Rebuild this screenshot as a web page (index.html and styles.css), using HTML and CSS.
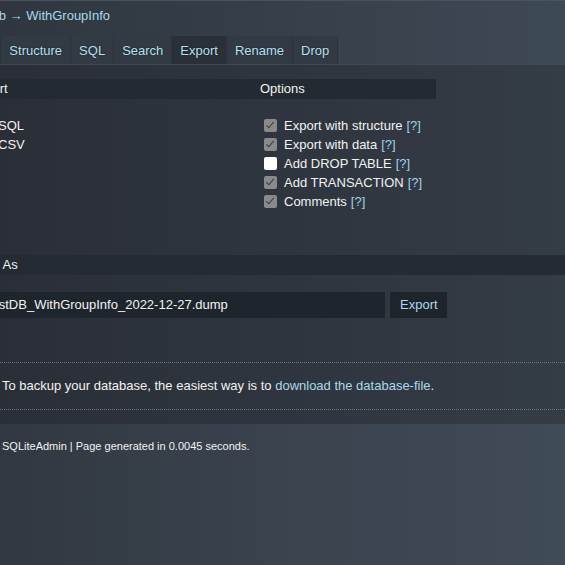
FILE: index.html
```html
<!DOCTYPE html>
<html>
<head>
<meta charset="utf-8">
<link rel="stylesheet" href="styles.css">
</head>
<body>
<div class="page">
  <header class="top">
    <div class="crumb"><a class="db">TestDB.db</a> → <a>WithGroupInfo</a></div>
  </header>
  <nav class="tabs">
    <a class="tab first">Browse</a><a class="tab">Structure</a><a class="tab">SQL</a><a class="tab">Search</a><a class="tab active">Export</a><a class="tab">Rename</a><a class="tab">Drop</a>
  </nav>
  <main class="panel">
    <div class="export-table">
      <div class="th th-left"><span class="cut-head">Export</span></div>
      <div class="th th-right">Options</div>
      <div class="td td-left">
        <div class="row cut-row"><span class="radio"></span>SQL</div>
        <div class="row cut-row"><span class="radio"></span>CSV</div>
      </div>
      <div class="td td-right">
        <div class="row"><span class="cb on"></span>Export with structure <a class="help">[?]</a></div>
        <div class="row"><span class="cb on"></span>Export with data <a class="help">[?]</a></div>
        <div class="row"><span class="cb"></span>Add DROP TABLE <a class="help">[?]</a></div>
        <div class="row"><span class="cb on"></span>Add TRANSACTION <a class="help">[?]</a></div>
        <div class="row"><span class="cb on"></span>Comments <a class="help">[?]</a></div>
      </div>
    </div>
    <div class="saveas"><span class="cut-head">Save As</span></div>
    <div class="saverow">
      <div class="field"><span class="cut-field">TestDB_WithGroupInfo_2022-12-27.dump</span></div>
      <button class="btn">Export</button>
    </div>
    <div class="backup">To backup your database, the easiest way is to <a>download the database-file</a>.</div>
  </main>
  <footer class="foot">SQLiteAdmin | Page generated in 0.0045 seconds.</footer>
</div>
</body>
</html>
```

FILE: styles.css
```css
html, body {
  margin: 0;
  padding: 0;
  height: 100%;
  overflow: hidden;
}
body {
  font-family: "Liberation Sans", Arial, sans-serif;
  font-size: 13px;
  color: #f2f2f2;
  background: linear-gradient(90deg, #313841 0%, #3a434e 50%, #404b58 100%);
}
a { color: #a9d9ec; text-decoration: none; }
.page {
  display: flex;
  flex-direction: column;
  min-height: 100%;
}
.top {
  height: 36px;
  box-sizing: border-box;
  padding-top: 7px;
  line-height: 16px;
  border-top: 1px solid #4a535d;
  background: linear-gradient(90deg, #2f363f 0%, #36404a 50%, #3e4956 100%);
}
.crumb { color: #a9d9ec; margin-left: -54px; white-space: nowrap; }
.tabs {
  display: flex;
  height: 28px;
  background: linear-gradient(90deg, #2f363f 0%, #36404a 50%, #3e4956 100%);
  border-bottom: 1px solid #3f4a56;
}
.tab {
  display: block;
  padding: 2px 8px 0;
  line-height: 26px;
  border-right: 1px solid #2c333b;
  background: #323a44;
  color: #b6e0f0;
  text-shadow: 0 0 2px rgba(0,0,0,0.5);
  white-space: nowrap;
}
.tab.first { margin-left: -59px; }
.tab.active { background: #2a3038; }
.panel {
  background: linear-gradient(90deg, #2a2f37 0%, #2f353e 50%, #343c46 100%);
  padding-top: 14px;
  padding-bottom: 14px;
}
.export-table {
  display: grid;
  grid-template-columns: 252px 184px;
  width: 436px;
}
.th {
  background: #242a31;
  height: 20px;
  line-height: 20px;
}
.th-left { overflow: hidden; }
.th-right { padding-left: 8px; }
.cut-head { display: inline-block; margin-left: -30px; white-space: nowrap; }
.td { padding-top: 17px; padding-bottom: 10px; }
.td-left { overflow: hidden; }
.row {
  display: flex;
  align-items: center;
  height: 19px;
  white-space: nowrap;
}
.cut-row { margin-left: -22px; }
.radio {
  width: 13px; height: 13px; border-radius: 50%;
  background: #ddd; margin-right: 7px; flex: none;
}
.td-right .row .help { margin-left: 4px; }
.help { color: #9fd3ea; }
.cb {
  flex: none;
  box-sizing: border-box;
  width: 13px;
  height: 13px;
  margin: 0 7px 0 12px;
  border-radius: 2px;
  background: #ffffff;
  position: relative;
}
.cb.on {
  background: #8a8a8a;
}
.cb.on::after {
  content: "";
  position: absolute;
  left: 4px;
  top: 1px;
  width: 3px;
  height: 7px;
  border-right: 1.5px solid #3c3c3c;
  border-bottom: 1.5px solid #3c3c3c;
  transform: rotate(40deg);
}
.saveas {
  margin-top: 34px;
  height: 20px;
  line-height: 20px;
  background: #252b33;
  overflow: hidden;
}
.saverow {
  display: flex;
  align-items: stretch;
  gap: 5px;
  margin-top: 17px;
  height: 26px;
}
.field {
  width: 385px;
  background: #1f252c;
  line-height: 26px;
  overflow: hidden;
  white-space: nowrap;
}
.cut-field { display: inline-block; margin-left: -15px; }
.btn {
  font: inherit;
  color: #a9d9ec;
  background: #1f242b;
  border: 0;
  padding: 0 10px;
  width: 57px;
  line-height: 26px;
}
.backup {
  margin-top: 44px;
  border-top: 1px dotted #6c747e;
  border-bottom: 1px dotted #6c747e;
  padding: 15px 2px 15px;
  line-height: 16px;
  white-space: nowrap;
}
.foot {
  flex: 1;
  font-size: 11px;
  padding: 15px 2px;
  line-height: 14px;
  background: linear-gradient(90deg, #313841 0%, #3a434e 50%, #404b58 100%);
}
```
